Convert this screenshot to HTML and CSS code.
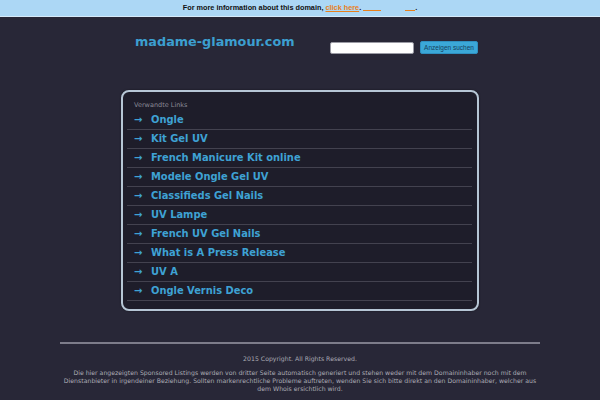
FILE: index.html
```html
<!DOCTYPE html>
<html>
<head>
<meta charset="utf-8">
<link rel="stylesheet" href="styles.css">
</head>
<body>
<div class="topbar">For more information about this domain, <a class="topbar-link" href="#">click here</a>. <span class="blank blank-a"></span><span class="gap"></span><span class="blank blank-b"></span>.</div>
<div class="page">
  <div class="header">
    <div class="logo">madame-glamour.com</div>
    <form class="search">
      <input class="search-input" type="text">
      <button class="search-btn" type="button">Anzeigen suchen</button>
    </form>
  </div>
  <div class="box">
    <div class="box-title">Verwandte Links</div>
    <ul class="links">
      <li class="link-row"><span class="arrow">&#8594;</span><a href="#">Ongle</a></li>
      <li class="link-row"><span class="arrow">&#8594;</span><a href="#">Kit Gel UV</a></li>
      <li class="link-row"><span class="arrow">&#8594;</span><a href="#">French Manicure Kit online</a></li>
      <li class="link-row"><span class="arrow">&#8594;</span><a href="#">Modele Ongle Gel UV</a></li>
      <li class="link-row"><span class="arrow">&#8594;</span><a href="#">Classifieds Gel Nails</a></li>
      <li class="link-row"><span class="arrow">&#8594;</span><a href="#">UV Lampe</a></li>
      <li class="link-row"><span class="arrow">&#8594;</span><a href="#">French UV Gel Nails</a></li>
      <li class="link-row"><span class="arrow">&#8594;</span><a href="#">What is A Press Release</a></li>
      <li class="link-row"><span class="arrow">&#8594;</span><a href="#">UV A</a></li>
      <li class="link-row"><span class="arrow">&#8594;</span><a href="#">Ongle Vernis Deco</a></li>
    </ul>
  </div>
</div>
<div class="footer">
  <div class="copyright">2015 Copyright. All Rights Reserved.</div>
  <p class="disclaimer">Die hier angezeigten Sponsored Listings werden von dritter Seite automatisch generiert und stehen weder mit dem Domaininhaber noch mit dem Dienstanbieter in irgendeiner Beziehung. Sollten markenrechtliche Probleme auftreten, wenden Sie sich bitte direkt an den Domaininhaber, welcher aus dem Whois ersichtlich wird.</p>
  <div class="privacy">Privacy Policy</div>
</div>
</body>
</html>
```
FILE: styles.css
```css
html, body {
  margin: 0;
  padding: 0;
}
body {
  background: #282737;
  font-family: "DejaVu Sans", sans-serif;
  width: 600px;
  height: 400px;
  overflow: hidden;
}
.topbar {
  height: 16px;
  line-height: 16px;
  background: #acd7f5;
  border-bottom: 1px solid #d6ebfa;
  text-align: center;
  font-family: "Liberation Sans", Arial, sans-serif;
  font-weight: bold;
  font-size: 7.3px;
  color: #111;
}
.topbar-link {
  color: #e8801c;
  text-decoration: underline;
}
.blank {
  display: inline-block;
  height: 7px;
  vertical-align: -1px;
  border-bottom: 1px solid #e8801c;
}
.blank-a { width: 18px; }
.blank-b { width: 10px; }
.gap { display: inline-block; width: 24px; }
.page {
  width: 358px;
  margin: 0 auto;
}
.header {
  display: flex;
  align-items: flex-start;
  height: 73px;
  padding-top: 17px;
  box-sizing: border-box;
}
.logo {
  margin-left: 14px;
  color: #3c9fd0;
  font-weight: bold;
  font-size: 12.8px;
  line-height: 15px;
  width: 195px;
  white-space: nowrap;
}
.search {
  display: flex;
  align-items: center;
  gap: 6px;
  margin: 7px 0 0;
}
.search-input {
  width: 84px;
  height: 12px;
  box-sizing: border-box;
  border: 1px solid #9a9aa4;
  border-radius: 2px;
  background: #fff;
  padding: 0;
}
.search-btn {
  width: 58px;
  height: 13px;
  box-sizing: border-box;
  padding: 0;
  border: 1px solid #2f8fc0;
  border-radius: 2px;
  background: #3ba8d8;
  color: #17415c;
  font-family: "Liberation Sans", Arial, sans-serif;
  font-size: 6.5px;
  line-height: 11px;
}
.box {
  height: 221px;
  box-sizing: border-box;
  border: 2px solid #b6c6d5;
  border-radius: 8px;
  background: #1e1d2a;
  padding: 8px 5px 0 4px;
  box-shadow: 0 0 2px rgba(0,0,0,0.5);
}
.box-title {
  padding-left: 7px;
  font-size: 6.5px;
  color: #8a8a96;
  height: 11px;
  line-height: 11px;
}
.links {
  list-style: none;
  margin: 0;
  padding: 0;
}
.link-row {
  height: 18px;
  line-height: 18px;
  border-bottom: 1px solid #43424f;
  padding-left: 7px;
  display: flex;
  align-items: center;
}
.arrow {
  color: #3ea2d4;
  font-weight: bold;
  font-size: 10px;
  width: 17px;
}
.link-row a {
  color: #3ea2d4;
  font-family: "DejaVu Sans Condensed", "DejaVu Sans", sans-serif;
  font-stretch: condensed;
  font-weight: bold;
  font-size: 11px;
  text-decoration: none;
}
.footer {
  width: 480px;
  margin: 31px auto 0;
  border-top: 2px solid #7d7c8a;
  text-align: center;
  color: #ababb4;
  font-size: 6.2px;
}
.copyright {
  margin-top: 10px;
  line-height: 9px;
}
.disclaimer {
  margin: 6px 0 0;
  line-height: 8.2px;
}
.privacy {
  margin-top: 8px;
  line-height: 9px;
}
```
